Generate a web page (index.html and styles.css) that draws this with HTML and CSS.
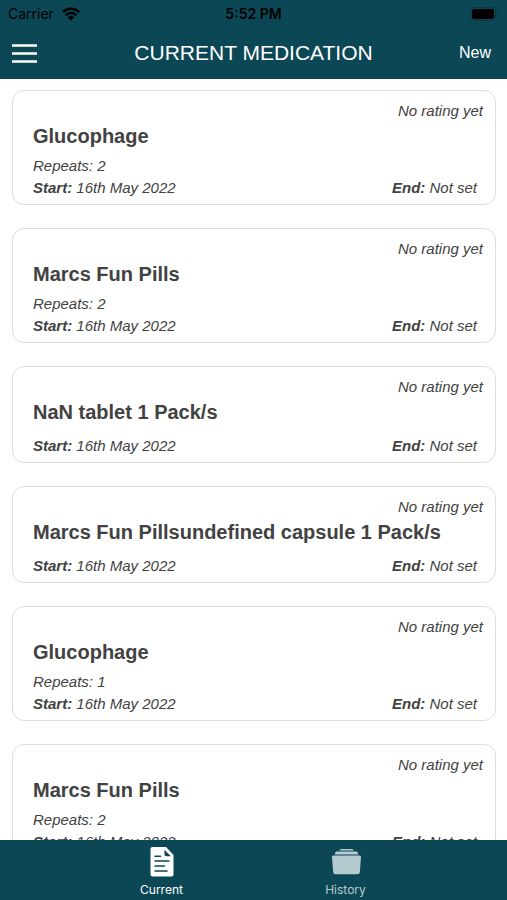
FILE: index.html
```html
<!DOCTYPE html>
<html lang="en">
<head>
<meta charset="utf-8">
<meta name="viewport" content="width=device-width, initial-scale=1">
<title>Current Medication</title>
<link rel="stylesheet" href="styles.css">
</head>
<body>
<div class="app">
  <header class="header">
    <div class="status">
      <span class="carrier">Carrier
        <svg class="wifi" viewBox="0 0 18 14" aria-hidden="true"><g fill="none" stroke="currentColor" stroke-width="2.5"><path d="M.9 5.1a11.5 11.5 0 0 1 16.2 0"/><path d="M3.7 8.3a7.5 7.5 0 0 1 10.6 0"/></g><path d="M9 13.6 5.9 10.4a4.4 4.4 0 0 1 6.2 0z" fill="currentColor"/></svg>
      </span>
      <span class="time">5:52 PM</span>
      <svg class="battery" viewBox="0 0 29 14" aria-hidden="true"><rect x=".5" y=".5" width="25" height="13" rx="4" fill="none" stroke="#083641"/><rect x="2" y="2" width="22" height="10" rx="2.5"/><path d="M27 4.5q2 2.5 0 5z" fill="#083641"/></svg>
    </div>
    <div class="navbar">
      <button class="menu" type="button" aria-label="Menu">
        <svg viewBox="0 0 25 19" aria-hidden="true"><path d="M0 1.5h25M0 9.5h25M0 17.5h25" stroke="currentColor" stroke-width="2.6"/></svg>
      </button>
      <h1 class="heading">CURRENT MEDICATION</h1>
      <button class="new" type="button">New</button>
    </div>
  </header>
  <main class="list">
    <article class="card">
      <p class="rating">No rating yet</p>
      <h2 class="name">Glucophage</h2>
      <p class="repeats">Repeats: 2</p>
      <div class="dates"><span><b>Start:</b> 16th May 2022</span><span><b>End:</b> Not set</span></div>
    </article>
    <article class="card">
      <p class="rating">No rating yet</p>
      <h2 class="name">Marcs Fun Pills</h2>
      <p class="repeats">Repeats: 2</p>
      <div class="dates"><span><b>Start:</b> 16th May 2022</span><span><b>End:</b> Not set</span></div>
    </article>
    <article class="card">
      <p class="rating">No rating yet</p>
      <h2 class="name">NaN tablet 1 Pack/s</h2>
      <div class="dates"><span><b>Start:</b> 16th May 2022</span><span><b>End:</b> Not set</span></div>
    </article>
    <article class="card">
      <p class="rating">No rating yet</p>
      <h2 class="name">Marcs Fun Pillsundefined capsule 1 Pack/s</h2>
      <div class="dates"><span><b>Start:</b> 16th May 2022</span><span><b>End:</b> Not set</span></div>
    </article>
    <article class="card">
      <p class="rating">No rating yet</p>
      <h2 class="name">Glucophage</h2>
      <p class="repeats">Repeats: 1</p>
      <div class="dates"><span><b>Start:</b> 16th May 2022</span><span><b>End:</b> Not set</span></div>
    </article>
    <article class="card">
      <p class="rating">No rating yet</p>
      <h2 class="name">Marcs Fun Pills</h2>
      <p class="repeats">Repeats: 2</p>
      <div class="dates"><span><b>Start:</b> 16th May 2022</span><span><b>End:</b> Not set</span></div>
    </article>
  </main>
  <nav class="tabs">
    <a class="tab active" href="#current" aria-current="page">
      <svg viewBox="0 0 32 32" aria-hidden="true"><path fill="currentColor" d="M6.500 1H20l7.500 8v19.500a2 2 0 0 1-2 2h-19a2 2 0 0 1-2-2V3a2 2 0 0 1 2-2z"/><path d="M18.500 3.800v4.400a2 2 0 0 0 2 2h4.300z" fill="#0c4756"/><path d="M9 10.300h5.500M9 15h14M9 20h9.500M9 25h12" stroke="#0c4756" stroke-width="1.500" stroke-linecap="round"/></svg>
      <span>Current</span>
    </a>
    <a class="tab" href="#history">
      <svg viewBox="0 0 32 32" aria-hidden="true"><g fill="currentColor"><path d="M9.500 4.500q0-1.500 1.500-1.500h11q1.500 0 1.500 1.500z"/><path d="M5 8.500V7.500q0-2 2-2h19q2 0 2 2v1z"/><path d="M3.500 9.500h26q1.700 0 1.500 1.700l-1.200 15q-.2 2-2.200 2H5.400q-2 0-2.200-2L2 11.200q-.2-1.700 1.500-1.700z"/></g></svg>
      <span>History</span>
    </a>
  </nav>
</div>
</body>
</html>
```
FILE: styles.css
```css
* {
  box-sizing: border-box;
}

body {
  margin: 0;
  background: #fff;
  color: #424242;
  font-family: "Liberation Sans", Arial, sans-serif;
}

h1, h2, p {
  margin: 0;
}

button {
  padding: 0;
  border: 0;
  background: none;
  color: inherit;
  font: inherit;
  cursor: pointer;
}

.app {
  display: flex;
  flex-direction: column;
  height: 100vh;
}

.header {
  flex: none;
  background: #0c4756;
  color: #fff;
}

.status,
.navbar {
  display: grid;
  grid-template-columns: 1fr auto 1fr;
  align-items: center;
}

.status {
  height: 27px;
  padding: 0 8px;
  color: #000;
  font: 14px/18px Inter, sans-serif;
}

.carrier {
  display: flex;
  align-items: center;
  gap: 8px;
}

.wifi {
  width: 18px;
  height: 14px;
}

.time {
  font-weight: 600;
}

.battery {
  justify-self: end;
  width: 29px;
  height: 14px;
}

.navbar {
  height: 52px;
  padding: 0 12px;
}

.menu {
  justify-self: start;
  display: flex;
}

.menu svg {
  width: 25px;
  height: 19px;
}

.heading {
  font-size: 21px;
  font-weight: 400;
  line-height: 24px;
}

.new {
  justify-self: end;
  padding-right: 4px;
  font-size: 16px;
  line-height: 20px;
}

.list {
  flex: 1;
  min-height: 0;
  overflow: hidden;
  display: flex;
  flex-direction: column;
  gap: 24px;
  padding: 11px 11px 12px 12px;
}

.card {
  flex: none;
  padding: 11px 12px 7px 20px;
  border: 1px solid #dedee0;
  border-radius: 12px;
  font-size: 15px;
  font-style: italic;
  line-height: 18px;
}

.card + .card {
  margin-top: -1px;
}

.rating {
  text-align: right;
}

.name {
  padding: 4px 0 9px;
  font-size: 20px;
  font-style: normal;
  font-weight: 700;
  line-height: 24px;
}

.dates {
  display: flex;
  justify-content: space-between;
  padding: 4px 6px 0 0;
}

.tabs {
  flex: none;
  display: flex;
  justify-content: center;
  height: 60px;
  background: #0c4756;
}

.tab {
  display: flex;
  flex-direction: column;
  align-items: center;
  width: 184px;
  padding-top: 6px;
  gap: 3px;
  color: #b5cace;
  font: 12px/18px Inter, sans-serif;
  text-decoration: none;
}

.tab.active {
  color: #fff;
}

.tab svg {
  width: 32px;
  height: 32px;
}
```
